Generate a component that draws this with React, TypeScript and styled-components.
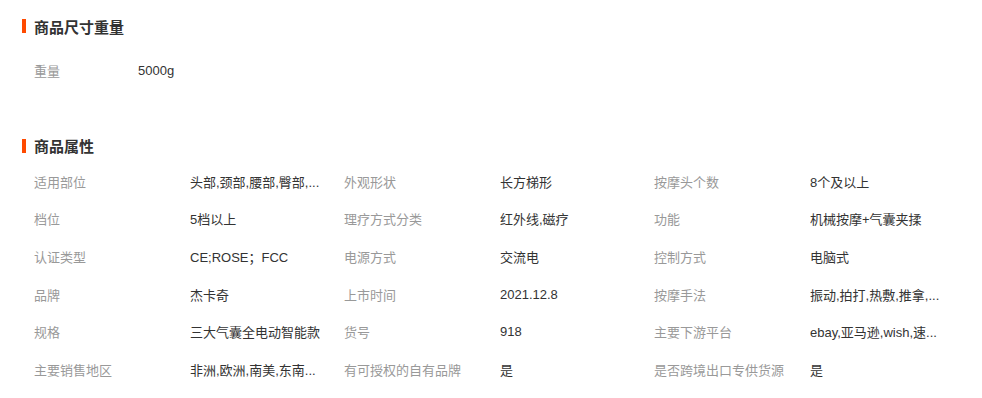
import { Fragment } from "react";
import styled, { createGlobalStyle } from "styled-components";

const GlobalStyle = createGlobalStyle`
  body {
    margin: 0;
    background: #fff;
    font-family: "Liberation Sans", "Noto Sans CJK SC", sans-serif;
    color: #333;
  }
`;

interface Attr {
  label: string;
  value: string;
}

const sizeAttrs: Attr[] = [{ label: "重量", value: "5000g" }];

const productAttrs: Attr[] = [
  { label: "适用部位", value: "头部,颈部,腰部,臀部,..." },
  { label: "外观形状", value: "长方梯形" },
  { label: "按摩头个数", value: "8个及以上" },
  { label: "档位", value: "5档以上" },
  { label: "理疗方式分类", value: "红外线,磁疗" },
  { label: "功能", value: "机械按摩+气囊夹揉" },
  { label: "认证类型", value: "CE;ROSE；FCC" },
  { label: "电源方式", value: "交流电" },
  { label: "控制方式", value: "电脑式" },
  { label: "品牌", value: "杰卡奇" },
  { label: "上市时间", value: "2021.12.8" },
  { label: "按摩手法", value: "振动,拍打,热敷,推拿,..." },
  { label: "规格", value: "三大气囊全电动智能款" },
  { label: "货号", value: "918" },
  { label: "主要下游平台", value: "ebay,亚马逊,wish,速..." },
  { label: "主要销售地区", value: "非洲,欧洲,南美,东南..." },
  { label: "有可授权的自有品牌", value: "是" },
  { label: "是否跨境出口专供货源", value: "是" },
];

const Page = styled.div`
  padding: 16px 0 0 22px;
  width: 960px;
`;

const Section = styled.section<{ gapTop: number }>`
  margin-top: ${({ gapTop }) => gapTop}px;
`;

const Title = styled.h3`
  display: flex;
  align-items: center;
  gap: 8px;
  margin: 0;
  height: 20px;
  font-size: 15px;
  font-weight: bold;
  color: #333;
  &::before {
    content: "";
    width: 4px;
    height: 14px;
    background: #ff4a00;
  }
`;

const Grid = styled.div<{ labelWidth: number; cols: number; offset: number }>`
  display: grid;
  grid-template-columns: ${({ labelWidth, cols }) =>
    `repeat(${cols}, ${labelWidth}px 154px)`};
  grid-auto-rows: 37.6px;
  padding-left: 12px;
  margin-top: ${({ offset }) => offset}px;
  font-size: 13px;
  align-items: center;
`;

const Label = styled.span`
  color: #999;
  white-space: nowrap;
`;

const Value = styled.span`
  color: #333;
  white-space: nowrap;
  overflow: hidden;
  text-overflow: ellipsis;
`;

const AttrGrid = ({
  items,
  labelWidth,
  cols,
  offset,
}: {
  items: Attr[];
  labelWidth: number;
  cols: number;
  offset: number;
}) => (
  <Grid labelWidth={labelWidth} cols={cols} offset={offset}>
    {items.map((a) => (
      <Fragment key={a.label}>
        <Label>{a.label}</Label>
        <Value>{a.value}</Value>
      </Fragment>
    ))}
  </Grid>
);

const App = () => {
  return (
    <>
      <GlobalStyle />
      <Page>
        <Section gapTop={0}>
          <Title>商品尺寸重量</Title>
          <AttrGrid items={sizeAttrs} labelWidth={104} cols={1} offset={16} />
        </Section>
        <Section gapTop={46}>
          <Title>商品属性</Title>
          <AttrGrid items={productAttrs} labelWidth={156} cols={3} offset={7} />
        </Section>
      </Page>
    </>
  );
};

export default App;
